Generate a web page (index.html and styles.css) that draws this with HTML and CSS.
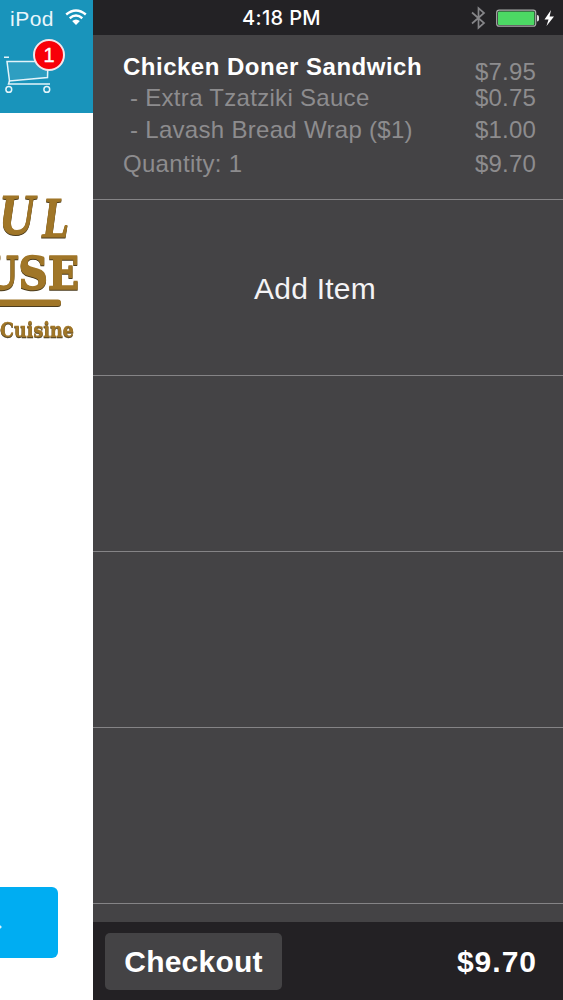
FILE: index.html
```
<!DOCTYPE html>
<html lang="en">
<head>
<meta charset="utf-8">
<title>Order</title>
<link rel="stylesheet" href="styles.css">
</head>
<body>
<div class="screen">
  <aside class="page">
    <header class="page-head">
      <div class="carrier">
        <span>iPod</span>
        <svg class="wifi" width="24" height="18" viewBox="0 0 24 18" fill="none" stroke="#fff" stroke-width="2.4"><path d="M2.2 6.5Q12-1.7 21.8 6.5M5.7 10.2Q12 5 18.3 10.2"/><path d="M12 17L8.1 13Q12 9.8 15.9 13Z" fill="#fff" stroke="none"/></svg>
      </div>
      <div class="cart">
        <svg width="56" height="42" viewBox="0 0 56 42" fill="none" stroke="#e4f4fa" stroke-width="1.5"><path d="M4 5.2H9M7 9.5H48L47.5 25.5L9.5 29Z" fill="#ffffff18"/><path d="M9.5 29L8.5 32H50"/><circle cx="8.8" cy="37.4" r="2.9"/><circle cx="46.8" cy="37.4" r="2.9"/></svg>
        <span class="badge">1</span>
      </div>
    </header>
    <svg class="logo" width="93" height="165" viewBox="0 0 93 165">
      <text class="script" x="-1" y="54" textLength="36" lengthAdjust="spacingAndGlyphs">U</text>
      <text class="script" x="42" y="57" textLength="27" lengthAdjust="spacingAndGlyphs">L</text>
      <text class="slab" x="-17" y="109" textLength="96" lengthAdjust="spacingAndGlyphs">USE</text>
      <rect x="-10" y="119.5" width="71" height="6.5" rx="3.2"/>
      <text class="cuisine" x="0" y="157" textLength="74" lengthAdjust="spacingAndGlyphs">Cuisine</text>
    </svg>
    <div class="action"></div>
  </aside>
  <main class="drawer">
    <div class="status">
      <span class="time">4:18 PM</span>
      <span class="power">
        <svg width="86" height="26" viewBox="0 0 86 26"><path d="M2 7.5L14 18L8.5 22.8V3.2L14 8L2 18.5" fill="none" stroke="#858588" stroke-width="1.7"/><rect x="26.7" y="5.2" width="39" height="16" rx="2.5" fill="none" stroke="#aaaeac" stroke-width="1.2"/><rect x="28" y="6.5" width="36.4" height="13.4" rx="1" fill="#4cd964"/><path d="M67 10Q69 10 69 12V14.5Q69 16.5 67 16.5Z" fill="#ddd"/><path d="M81 5L74.5 14.6H78.5L76.5 21L84 11.6H79.6Z" fill="#fff"/></svg>
      </span>
    </div>
    <section class="row order">
      <div class="line first"><strong>Chicken Doner Sandwich</strong><span class="price">$7.95</span></div>
      <div class="line extra"><span>- Extra Tzatziki Sauce</span><span class="price">$0.75</span></div>
      <div class="line extra"><span>- Lavash Bread Wrap ($1)</span><span class="price">$1.00</span></div>
      <div class="line total"><span>Quantity: 1</span><span class="price">$9.70</span></div>
    </section>
    <section class="row add"><span>Add Item</span></section>
    <section class="row"></section>
    <section class="row"></section>
    <section class="row"></section>
    <footer class="bar">
      <button class="checkout"><span>Checkout</span></button>
      <span class="sum">$9.70</span>
    </footer>
  </main>
</div>
</body>
</html>
```
FILE: styles.css
```
* { box-sizing: border-box; }
body { margin: 0; font-family: "Liberation Sans", Arial, sans-serif; }
.screen { display: flex; width: 563px; height: 1000px; overflow: hidden; background: #fff; }

.page { width: 93px; height: 1000px; overflow: hidden; display: flex; flex-direction: column; }
.page-head { height: 113px; flex: none; background: #1994bb; color: #e9f6fb; }
.carrier { height: 36px; padding: 1px 5px 0 10px; display: flex; align-items: center; justify-content: space-between; font-size: 21px; letter-spacing: .5px; }
.wifi { margin-top: -3px; }
.cart { position: relative; height: 77px; padding-top: 16px; }
.cart svg { display: block; }
.badge { position: absolute; left: 33px; top: 3px; width: 32px; height: 32px; border: 2px solid #f3e6ea; border-radius: 50%; background: #f80008; color: #fff; font-size: 20px; line-height: 28px; text-align: center; -webkit-text-stroke: .4px #fff; }
.logo { margin-top: 67px; display: block; flex: none; fill: #a07628; filter: drop-shadow(.8px 1px 0 #4b3c1e); }
.logo text { stroke: #a07628; }
.script { font: italic bold 57px "Liberation Serif", serif; stroke-width: 1px; }
.slab { font: bold 45px "DejaVu Serif", serif; stroke-width: 1.4px; }
.cuisine { font: bold 20px "DejaVu Serif", serif; stroke-width: .3px; }
.action { width: 58px; height: 71px; margin-top: 542px; flex: none; border-radius: 0 6px 6px 0; background: radial-gradient(circle at 0 40px, #d9f3fd 1px, #00adf2 2px); }

.drawer { width: 470px; display: flex; flex-direction: column; background: #444345; }
.status { height: 35px; flex: none; background: #232225; color: #fff; display: flex; justify-content: space-between; align-items: center; padding: 1px 7px 0 149px; }
.time { font-family: Inter, sans-serif; font-size: 20px; font-weight: 500; letter-spacing: .35px; }
.power svg { display: block; }
.row { height: 176px; flex: none; border-bottom: 1px solid #858486; }
.order { height: 165px; padding: 18px 27px 0 30px; color: #8d8c8e; font-size: 24px; }
.line { display: flex; justify-content: space-between; height: 30px; line-height: 30px; white-space: pre; letter-spacing: .3px; }
.line strong { color: #fff; font-size: 24px; letter-spacing: .5px; line-height: 28px; }
.price { letter-spacing: .2px; }
.line.first .price { padding-top: 4px; }
.line.extra { padding-left: 7px; height: 32px; }
.line.total { padding-top: 2px; }
.add { display: flex; align-items: center; justify-content: center; padding: 2px 26px 0 0; color: #f4f3f5; font-size: 30px; letter-spacing: .25px; }
.bar { height: 78px; margin-top: 18px; flex: none; padding: 0 26px 0 12px; display: flex; align-items: center; justify-content: space-between; background: #232124; color: #fff; font-weight: bold; font-size: 30px; }
.sum { letter-spacing: 1px; padding-top: 2px; }
.checkout { width: 177px; height: 57px; padding: 2px 0 0; border: 0; border-radius: 5px; background: #444345; color: #fff; font: bold 30px "Liberation Sans", Arial, sans-serif; letter-spacing: .2px; }
```
